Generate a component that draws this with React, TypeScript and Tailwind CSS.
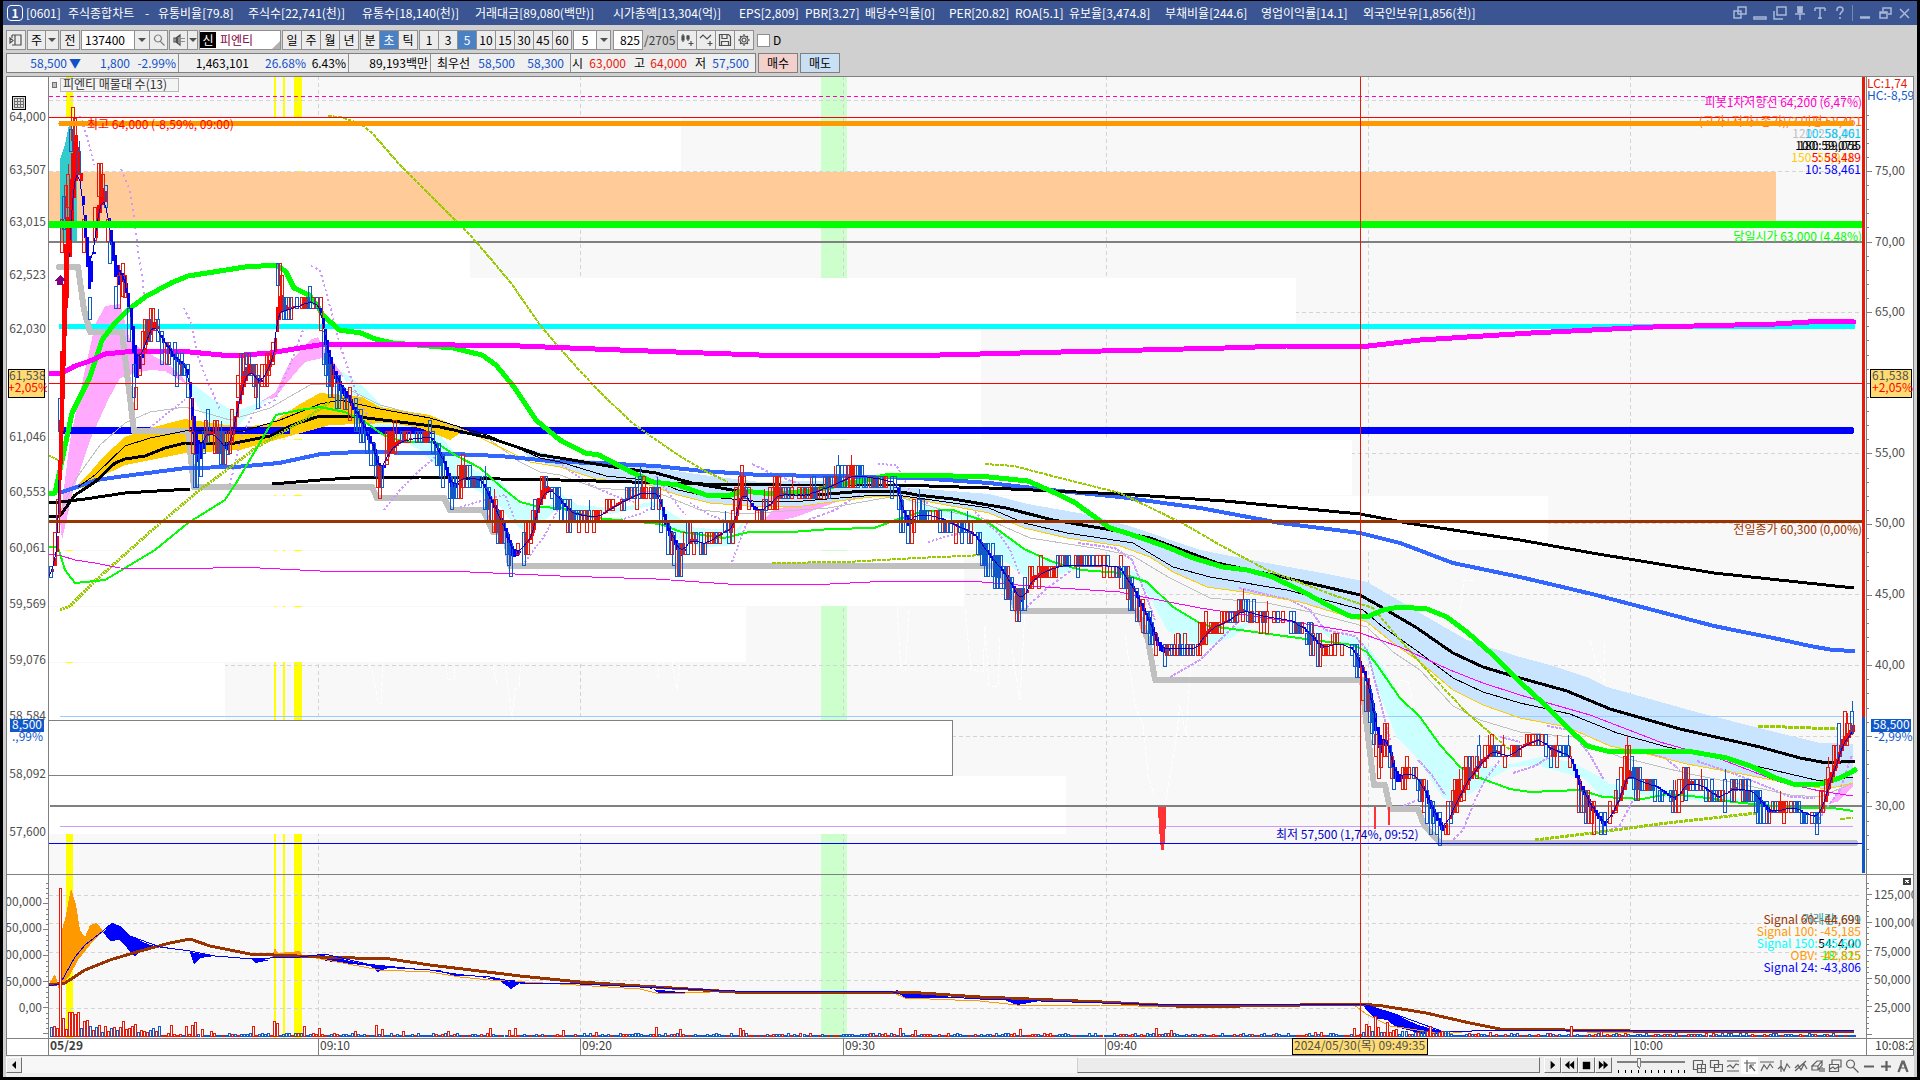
import React from "react";

type Pt = [number, number];

const parse = (s: string): Pt[] =>
  s.trim().split(/\s+/).map((p) => p.split(",").map(Number) as Pt);

const at = (pts: Pt[], x: number) => {
  if (x <= pts[0][0]) return pts[0][1];
  for (let i = 1; i < pts.length; i++) {
    if (x <= pts[i][0]) {
      const [x0, y0] = pts[i - 1];
      const [x1, y1] = pts[i];
      return y0 + ((y1 - y0) * (x - x0)) / (x1 - x0 || 1);
    }
  }
  return pts[pts.length - 1][1];
};

const noise = (n: number) => {
  const v = Math.sin(n * 127.1 + 311.7) * 43758.5453;
  return v - Math.floor(v);
};

/* ------------------------------------------------------------------ */
/* Series                                                              */
/* ------------------------------------------------------------------ */

const PRICE = parse(`49,576 54,540 57,500 60,230 66,190 70,125 75,130 80,200 85,290 88,310 92,240 96,185 103,180 107,240
115,300 122,275 128,330 134,400 138,360 145,330 152,315 160,345 175,365 185,370 194,480 199,455 205,425 215,440 225,455
232,420 238,370 248,360 257,390 265,365 273,345 276,275 283,310 295,305 310,300 318,310 325,370 335,390 345,400 355,420 370,450
378,485 385,450 392,440 428,436 440,465 450,495 460,475 478,480 490,510 500,530 511,562 520,548 531,525 538,480 550,490
566,515 595,517 612,504 640,491 656,494 662,530 678,560 688,536 702,545 715,534 730,526 740,479 750,512 760,512 775,492
800,496 830,484 850,474 880,480 894,484 903,535 915,512 930,516 952,526 970,534 985,557 1000,574 1018,606 1030,574
1060,564 1115,566 1130,592 1145,624 1158,656 1170,648 1195,648 1203,628 1225,620 1240,608 1255,616 1285,620 1302,630
1318,650 1335,642 1350,650 1362,680 1370,715 1377,765 1384,738 1393,788 1405,772 1415,778 1428,812 1441,836 1450,804
1465,774 1480,758 1490,748 1505,758 1520,744 1538,738 1545,750 1567,756 1577,792 1590,814 1603,828 1615,798 1626,764
1635,782 1655,788 1672,802 1685,778 1700,788 1717,800 1730,786 1750,792 1765,814 1790,806 1800,814 1816,818 1825,780 1840,735 1853,722`);

const STEP = 11.2;
const BAR = 2.18;

function buildCandles() {
  let up = "";
  let down = "";
  let red = "";
  let blue = "";
  let line = "";
  let fast = PRICE[0][1];
  let slow = PRICE[0][1];
  const snap = (y: number) => Math.round(Math.round((y - 465) / STEP) * STEP + 465);
  for (let i = 0; i < 828; i++) {
    const x = Math.round(49 + i * BAR);
    const mid = at(PRICE, x);
    const prev = at(PRICE, x - 6);
    const slope = mid - prev;
    fast += (mid - fast) * 0.5;
    slow += (mid - slow) * 0.26;
    const a = Math.round(fast);
    const b = Math.round(slow);
    if (Math.abs(a - b) > 1) {
      const seg = `M${x} ${a}V${b}h3V${a}z`;
      if (a < b) red += seg;
      else blue += seg;
    }
    line += `${i ? "L" : "M"}${x} ${b}`;
    if (noise(i) < 0.22) continue;
    const rising = slope < -1 ? noise(i + 9) < 0.8 : slope > 1 ? noise(i + 9) < 0.25 : noise(i + 9) < 0.5;
    const span = 11 * (Math.abs(slope) > 6 ? 2 + Math.round(noise(i + 3)) : 1 + (noise(i + 3) > 0.8 ? 1 : 0));
    const top = snap(mid - span / 2);
    const body = `M${x}.5 ${top}.5h3v${span}h-3z`;
    const wick = noise(i + 5) > 0.93 ? `M${x + 2}.5 ${top - 11}.5v11` : "";
    if (rising) up += body + wick;
    else down += body + wick;
  }
  return { up, down, red, blue, line };
}

const CANDLES = buildCandles();

const VOLUME_PEAKS: Record<number, number> = {
  52: 10, 55: 8, 60: 148, 63: 18, 67: 24, 71: 24, 74: 22, 78: 24, 82: 15, 87: 16, 92: 6, 98: 11, 105: 10, 112: 9, 122: 15,
  130: 10, 134: 12, 142: 5, 155: 5, 170: 11, 185: 10, 192: 11, 195: 14, 200: 7, 211: 5, 251: 10, 273: 15, 276: 13, 303: 10,
  319: 8, 355: 5, 376: 11, 382: 7, 402: 5, 447: 5, 490: 8, 508: 6, 514: 8, 562: 6, 595: 4, 655: 9, 680: 7, 738: 8, 743: 6,
  900: 8, 915: 6, 1018: 7, 1155: 8, 1169: 6, 1313: 4, 1321: 4, 1354: 8, 1366: 12, 1369: 10, 1373: 20, 1377: 9, 1387: 14,
  1396: 7, 1418: 4, 1428: 10, 1440: 5, 1490: 4, 1571: 10, 1600: 5,
};

function buildVolume() {
  let up = "";
  let down = "";
  for (let i = 0; i < 600; i++) {
    const x = Math.round(50 + i * 3.01);
    const peakKey = Object.keys(VOLUME_PEAKS).find((k) => Math.abs(Number(k) - x) <= 1);
    const base = x < 160 ? 4 + noise(i) * 6 : x > 1360 && x < 1450 ? 2 + noise(i) * 4 : noise(i) * 3;
    const h = Math.max(1, Math.round(peakKey ? VOLUME_PEAKS[Number(peakKey)] : base));
    const bar = `M${x}.5 1036.5v-${h}h2v${h}z`;
    if (peakKey || noise(i + 40) > 0.66) up += bar;
    else down += bar;
  }
  return { up, down };
}

const VOLUME = buildVolume();

type Curve = { c: string; w: number; p: string; d?: string };

const AREAS: { c: string; p: string }[] = [
  { c: "#ffaaff", p: "60,520 70,440 85,370 95,325 105,306 120,304 130,340 142,350 165,362 180,374 188,385 165,371 150,370 135,373 120,378 108,400 90,440 72,495 62,540" },
  { c: "#ffaaff", p: "260,402 275,393 290,362 310,340 318,337 325,350 345,378 335,372 322,358 305,362 285,385 275,398" },
  { c: "#ffaaff", p: "763,520 774,510 810,500 846,488 875,487 860,493 831,504 796,517 770,523" },
  { c: "#ffaaff", p: "1830,803 1853,773 1853,787 1837,802" },
  { c: "#ccffff", p: "186,378 210,397 235,412 265,400 272,397 245,418 232,434 215,427 200,410 190,392" },
  { c: "#ccffff", p: "340,370 360,384 385,408 405,418 430,422 450,448 475,470 500,480 520,505 560,505 545,520 525,532 510,520 495,500 470,487 440,470 420,450 400,440 375,428 355,400" },
  { c: "#ccffff", p: "560,493 578,505 615,508 653,502 670,512 695,528 735,530 745,520 735,545 700,548 675,537 655,505 610,514 575,517 560,508" },
  { c: "#ccffff", p: "899,495 917,503 946,510 967,512 989,523 1024,550 1053,560 1078,568 1053,577 1024,576 1003,560 974,530 953,520 924,512" },
  { c: "#ccffff", p: "1120,565 1137,573 1150,584 1173,606 1200,624 1227,629 1253,621 1233,637 1207,646 1183,640 1167,630 1153,603 1137,580" },
  { c: "#ccffff", p: "1307,623 1333,634 1360,638 1373,653 1387,673 1400,698 1420,718 1440,747 1457,767 1477,768 1520,763 1493,777 1473,792 1453,802 1443,798 1427,773 1413,753 1397,738 1383,703 1370,667 1360,648 1333,640" },
  { c: "#ccffff", p: "1500,767 1540,757 1572,762 1600,777 1610,784 1623,785 1627,773 1650,787 1690,793 1733,797 1780,803 1767,806 1733,803 1690,800 1643,795 1610,797 1600,795 1583,778 1540,766" },
  { c: "#c8e4ff", p: "520,447 560,457 600,461 650,467 703,475 760,482 846,480 900,487 989,494 1028,504 1090,515 1133,527 1200,550 1267,563 1333,575 1367,582 1393,597 1420,613 1467,640 1520,657 1550,665 1587,677 1607,687 1700,713 1767,730 1820,743 1853,744 1853,783 1827,789 1787,783 1747,775 1687,764 1643,753 1610,746 1567,727 1520,718 1483,705 1453,690 1420,662 1393,643 1367,622 1333,612 1300,602 1243,592 1207,587 1173,572 1150,557 1120,546 1067,538 1024,528 989,513 946,505 903,497 881,496 846,500 803,506 760,507 710,503 678,495 646,484 596,479 560,467 530,460" },
  { c: "#33cccc", p: "60,243 60,160 65,145 70,120 77,150 77,243" },
];

const GOLD = "75,487 85,478 105,455 125,437 150,428 185,419 240,427 270,424 300,404 320,393 345,395 362,397 380,407 430,415 465,430 450,440 420,428 390,423 330,425 290,436 240,450 185,453 125,465 100,477 85,488";

const CURVES: Curve[] = [
  { c: "#c0c0c0", w: 6, p: "59,267 78,267 84,310 90,332 122,332 134,431 188,431 194,487 372,487 377,498 444,498 450,510 483,510 493,532 505,532 510,566 996,566 1005,580 1017,611 1137,611 1148,640 1155,680 1362,680 1366,720 1374,785 1385,785 1390,809 1418,809 1424,825 1440,843 1855,843" },
  { c: "#cc99ff", w: 2, d: "2 3", p: "80,116 88,140 94,165" },
  { c: "#cc99ff", w: 2, d: "2 4", p: "121,169 128,185 133,207 137,243 142,275 145,300" },
  { c: "#cc99ff", w: 2, d: "2 3", p: "184,308 192,325 198,356 207,380 220,410" },
  { c: "#cc99ff", w: 2, d: "2 2", p: "150,428 165,415 185,400" },
  { c: "#cc99ff", w: 2, d: "2 3", p: "230,485 240,440 255,410 275,400 290,365 303,330" },
  { c: "#cc99ff", w: 2, d: "2 3", p: "311,266 320,270 327,295 340,345 355,390 372,425" },
  { c: "#cc99ff", w: 2, d: "2 2", p: "384,510 400,490 420,470 438,455" },
  { c: "#cc99ff", w: 2, d: "2 2", p: "460,507 485,500 505,495 515,520" },
  { c: "#cc99ff", w: 2, d: "2 2", p: "525,562 545,535 560,505" },
  { c: "#cc99ff", w: 2, d: "2 2", p: "562,465 590,485 620,498 635,502" },
  { c: "#cc99ff", w: 2, d: "2 2", p: "620,520 640,514 655,506" },
  { c: "#cc99ff", w: 2, d: "2 2", p: "656,476 668,492 685,515" },
  { c: "#cc99ff", w: 2, d: "2 2", p: "690,503 710,515 728,522" },
  { c: "#cc99ff", w: 2, d: "2 2", p: "732,562 742,535 748,520" },
  { c: "#cc99ff", w: 2, d: "3 2", p: "752,464 775,475 800,484" },
  { c: "#cc99ff", w: 2, d: "3 2", p: "808,520 835,510 850,500 860,495" },
  { c: "#cc99ff", w: 2, d: "2 2", p: "878,464 896,465 902,475 912,495 930,505" },
  { c: "#cc99ff", w: 2, d: "2 2", p: "928,542 945,537 962,533" },
  { c: "#cc99ff", w: 2, d: "2 2", p: "975,512 1000,535 1010,550 1020,575" },
  { c: "#cc99ff", w: 2, d: "3 2", p: "1026,608 1045,590 1072,570" },
  { c: "#cc99ff", w: 2, d: "3 1", p: "1078,543 1115,548 1132,560 1142,585 1155,620" },
  { c: "#cc99ff", w: 2, d: "3 1", p: "1170,677 1200,660 1240,620" },
  { c: "#cc99ff", w: 2, d: "3 1", p: "1239,588 1290,600 1310,610 1325,630 1355,636 1367,650 1380,700 1390,740" },
  { c: "#cc99ff", w: 2, d: "3 2", p: "1403,806 1418,800" },
  { c: "#cc99ff", w: 2, d: "3 1", p: "1418,760 1432,775 1445,795" },
  { c: "#cc99ff", w: 2, d: "3 2", p: "1453,840 1463,830 1475,800 1485,780 1500,760" },
  { c: "#cc99ff", w: 2, d: "3 1", p: "1500,737 1520,742" },
  { c: "#cc99ff", w: 2, d: "3 1", p: "1513,773 1535,766 1560,750" },
  { c: "#cc99ff", w: 2, d: "3 1", p: "1547,726 1570,730 1590,755 1604,780" },
  { c: "#cc99ff", w: 2, d: "3 2", p: "1610,830 1620,825 1633,800" },
  { c: "#cc99ff", w: 2, d: "3 1", p: "1640,751 1665,758 1680,770" },
  { c: "#cc99ff", w: 2, d: "3 1", p: "1697,761 1740,776 1775,790 1790,797 1815,798" },
  { c: "#cc99ff", w: 2, d: "3 2", p: "1818,820 1840,790 1852,755" },
  { c: "#c0c0c0", w: 1, p: "60,512 75,480 100,445 125,423 150,412 185,407 230,420 270,408 310,385 325,384 350,390 380,405 430,418 490,440 520,462 540,472 560,475 596,488 656,492 700,510 739,514 771,512 828,508 896,496 950,512 989,520 1030,538 1100,549 1133,556 1170,578 1210,598 1267,603 1310,612 1367,627 1393,652 1420,670 1453,706 1480,720 1520,732 1573,737 1620,757 1690,774 1740,784 1790,795 1820,797 1853,783" },
  { c: "#ffcc00", w: 1, p: "465,430 530,462 560,467 596,479 646,484 678,495 710,503 760,507 803,506 846,500 881,496 903,497 946,505 989,513 1024,528 1067,538 1120,546 1150,557 1173,572 1207,587 1243,592 1300,602 1333,612 1367,622 1393,643 1420,662 1453,690 1483,705 1520,718 1567,727 1610,746 1643,753 1687,764 1747,775 1787,783 1827,789 1853,783" },
  { c: "#3366ff", w: 4, p: "59,493 77,487 96,480 125,476 186,468 236,467 279,463 321,454 357,452 429,453 500,456 560,462 596,463 656,466 703,471 760,475 831,476 917,478 989,483 1060,491 1120,497 1200,508 1280,523 1360,533 1400,543 1453,563 1520,577 1592,594 1714,626 1783,640 1810,646 1833,650 1855,651" },
  { c: "#000000", w: 3, p: "48,503 60,502 85,499 125,493 190,489" },
  { c: "#000000", w: 3, p: "272,484 320,480 350,478 420,477 500,479 560,480 703,484 781,485 899,485 989,488 1120,494 1225,501 1360,514 1407,523 1520,540 1592,553 1714,573 1854,588" },
  { c: "#000000", w: 1, p: "78,487 95,475 125,446 150,438 190,430 240,432 280,420 320,404 340,400 380,409 430,418 490,436 540,458 560,462 606,476 656,481 678,490 710,497 753,501 803,501 864,496 896,495 946,502 989,508 1024,523 1067,533 1120,541 1133,543 1173,567 1210,577 1287,590 1333,602 1363,610 1383,627 1420,653 1453,678 1483,692 1520,703 1570,714 1617,733 1667,747 1760,767 1820,781 1853,777" },
  { c: "#000000", w: 3, p: "48,517 60,516 75,495 95,482 115,463 125,459 145,456 165,448 185,443 230,444 270,436 295,424 320,416 350,416 400,422 440,427 490,438 520,448 540,455 560,458 614,467 656,473 692,483 738,491 774,494 828,494 864,491 896,491 917,495 953,499 1006,508 1053,520 1106,529 1150,538 1217,563 1273,575 1313,584 1360,595 1383,608 1417,628 1453,653 1483,667 1513,676 1567,691 1610,709 1680,729 1760,747 1800,758 1827,763 1855,761" },
  { c: "#99cc00", w: 2, d: "4 1", p: "328,116 340,117 350,120 362,125 372,133 400,165 430,195 455,220 470,235 490,258 500,270 511,283 540,325 557,345 580,371 600,392 630,421 649,435 675,453 703,470 728,482" },
  { c: "#99cc00", w: 2, d: "4 1", p: "985,464 1014,466 1060,478 1120,493 1182,523 1220,545 1267,570 1333,595 1373,608 1400,640 1433,677 1467,713 1510,750" },
  { c: "#99cc00", w: 3, d: "2 1", p: "60,610 70,606 96,580 150,532 196,493 257,447 304,420 329,403" },
  { c: "#99cc00", w: 2, d: "3 1", p: "48,455 60,461" },
  { c: "#99cc00", w: 2, d: "4 1", p: "772,563 846,562 917,558 985,555" },
  { c: "#99cc00", w: 3, d: "4 1", p: "1535,840 1600,832 1667,823 1757,813" },
  { c: "#99cc00", w: 3, d: "5 1", p: "1758,726 1838,729" },
  { c: "#99cc00", w: 2, d: "5 1", p: "1840,819 1853,818" },
  { c: "#00ff00", w: 2, p: "48,547 58,547 65,570 75,583 105,580 125,568 155,550 188,523 225,500 238,480 258,446 276,415 300,410 320,407 345,412 365,422 385,436 405,442 435,442 455,455 480,468 500,486 520,502 540,507 560,508 596,518 660,524 681,532 724,538 749,532 792,532 831,529 874,528 896,520 924,511 953,510 989,523 1024,549 1053,562 1081,570 1120,573 1147,582 1173,607 1203,625 1240,630 1313,640 1353,645 1367,652 1377,665 1400,698 1420,717 1440,745 1460,767 1480,778 1510,789 1530,792 1580,790 1603,797 1643,799 1667,794 1700,797 1733,802 1793,808 1833,808 1853,811" },
  { c: "#ff00ff", w: 1, p: "48,554 62,556 75,560 95,563 120,568 186,569 240,567 320,571 470,572 560,576 656,579 728,584 830,584 890,581 970,581 1030,586 1120,592 1133,595 1200,608 1300,623 1360,633 1400,647 1450,670 1483,683 1520,695 1590,715 1660,742 1720,759 1780,782 1820,791 1853,796" },
  { c: "#00ff00", w: 5, p: "48,493 55,493 60,470 72,413 90,377 102,340 115,323 128,310 145,297 171,283 188,276 245,267 277,265 286,272 294,288 309,295 318,307 323,315 339,330 361,333 375,339 393,343 453,348 482,355 496,365 514,387 536,420 560,440 585,453 599,455 631,472 653,482 678,485 706,495 728,496 742,491 774,494 810,491 839,485 867,480 890,475 917,475 989,477 1028,481 1053,492 1074,502 1110,528 1130,534 1167,547 1193,558 1223,567 1247,570 1270,576 1300,590 1333,608 1350,616 1367,617 1383,610 1400,607 1427,609 1447,617 1467,632 1493,655 1520,682 1545,705 1567,727 1587,746 1607,751 1687,751 1727,758 1753,767 1773,777 1793,784 1820,784 1840,778 1855,770" },
  { c: "#ff00ff", w: 5, p: "48,373 60,374 75,366 90,361 105,354 125,352 165,351 190,352 232,356 270,353 300,348 325,344 390,344 520,346 620,350 759,355 857,355 940,355 1102,351 1225,348 1286,346 1360,347 1420,340 1531,333 1653,327 1776,324 1825,321 1854,322" },
];

/* Faint traces of an indicator drawn in white over the pale background. */
const WHITE_TRACES = "M369 663l3 8l6 30l3 4l2 -42M445 663l3 16l6 0l1 -14M493 665l4 20M505 663l7 56l3 -30l4 -2l2 -24M658 660v17M672 662l5 28l3 -26M897 607l4 62l4 4l4 -62M965 610l6 60l12 2l2 -46l4 60l9 0l2 -50M1012 650l8 50l5 -90M1125 635l10 70l8 20l5 50l6 20M1166 800l10 -60l4 -35l6 30l6 -90M1395 715l5 -35l8 2l6 25M1420 710l10 50h10M1590 640l10 35l4 6v-40M1460 610l4 -30h10";

const WHITE_ROWS: [number, number, number][] = [
  [118, 53, 681], [221, 57, 470], [278, 47, 1296], [326, 113, 981], [440, 55, 1352], [496, 54, 1548],
  [551, 55, 964], [607, 55, 746], [663, 57, 225], [776, 58, 1066],
];

const GRID_X = [318, 580, 843, 1106, 1368, 1630];
const GRID_Y = [100, 171, 241, 312, 383, 453, 523, 594, 665, 736];
const YELLOW: [number, number][] = [[66, 7], [274, 2], [283, 2], [294, 8]];

const LEFT_LABELS: [number, string][] = [
  [117, "64,000"], [170, "63,507"], [222, "63,015"], [275, "62,523"], [329, "62,030"], [437, "61,046"], [492, "60,553"],
  [548, "60,061"], [604, "59,569"], [660, "59,076"], [716, "58,584"], [774, "58,092"], [832, "57,600"],
];
const RIGHT_LABELS: [number, string][] = [
  [171, "75,00"], [242, "70,00"], [312, "65,00"], [453, "55,00"], [523, "50,00"], [594, "45,00"], [665, "40,00"], [806, "30,00"],
];
const LOWER_LEFT: [number, string][] = [[902, "00,000"], [928, "50,000"], [955, "00,000"], [982, "50,000"], [1008, "0,00"]];
const LOWER_RIGHT: [number, string][] = [[895, "125,000"], [923, "100,000"], [952, "75,000"], [980, "50,000"], [1008, "25,000"]];
const TIMES: [number, string][] = [[320, "09:10"], [582, "09:20"], [845, "09:30"], [1107, "09:40"], [1633, "10:00"]];

/* ------------------------------------------------------------------ */
/* Chart                                                               */
/* ------------------------------------------------------------------ */

function T({ x, y, c, end, bold, children }: { x: number; y: number; c: string; end?: boolean; bold?: boolean; children: string }) {
  return (
    <text x={x} y={y + 4} fill={c} textAnchor={end ? "end" : "start"} fontWeight={bold ? 700 : 400}>
      {children}
    </text>
  );
}

function H({ y, x1 = 49, x2 = 1862, c, w = 1, d }: { y: number; x1?: number; x2?: number; c: string; w?: number; d?: string }) {
  return <line x1={x1} x2={x2} y1={y} y2={y} stroke={c} strokeWidth={w} strokeDasharray={d} />;
}

function Line({ s }: { s: Curve }) {
  return (
    <polyline
      points={s.p}
      fill="none"
      stroke={s.c}
      strokeWidth={s.w}
      strokeDasharray={s.d}
      strokeLinejoin="round"
      strokeLinecap={s.w > 4 ? "round" : "butt"}
    />
  );
}

function Chart() {
  return (
    <svg
      viewBox="6 76 1908 980"
      preserveAspectRatio="none"
      role="img"
      aria-label="피엔티 5초 차트"
      className="block h-full w-full text-[12px]"
      shapeRendering="crispEdges"
    >
      <defs>
        <clipPath id="left-axis"><rect x="7" y="76" width="40" height="980" /></clipPath>
        <clipPath id="right-axis"><rect x="1867" y="76" width="46" height="980" /></clipPath>
        <clipPath id="plot"><rect x="49" y="76" width="1813" height="962" /></clipPath>
      </defs>
      <rect x="6" y="76" width="1908" height="980" fill="#ffffff" />
      <rect x="49" y="76" width="1817" height="962" fill="#f8f8f8" />
      <rect x="821" y="76" width="26" height="962" fill="#ccffcc" />
      {YELLOW.map(([x, w]) => <rect key={x} x={x} y="76" width={w} height="962" fill="#ffff00" />)}
      {GRID_X.map((x) => <line key={x} x1={x + 0.5} x2={x + 0.5} y1="76" y2="1038" stroke="#d4d4d4" strokeDasharray="4 3" />)}
      {GRID_Y.map((y) => <H key={y} y={y + 0.5} c="#d4d4d4" d="4 3" />)}
      {LOWER_RIGHT.map(([y]) => <H key={y} y={y + 0.5} c="#d4d4d4" d="4 3" />)}
      {WHITE_ROWS.map(([y, h, x]) => <rect key={y} x="49" y={y} width={x - 49} height={h} fill="#ffffff" />)}
      <rect x="49" y="172" width="1727" height="49" fill="#ffcc99" />
      <rect x="48.5" y="720.5" width="904" height="55" fill="#ffffff" stroke="#808080" />
      <path d={WHITE_TRACES} fill="none" stroke="#ffffff" strokeDasharray="5 2" />

      <g clipPath="url(#plot)">
        {AREAS.map((a, i) => <polygon key={i} points={a.p} fill={a.c} />)}
        <H y={716.5} x1={60} x2={1853} c="#99ccff" />
        <H y={806} x1={50} c="#808080" w={2} />
        <H y={826.5} x1={60} x2={1853} c="#cc99ff" />
        <H y={242} c="#808080" w={2} />
        <H y={326.5} x1={59} x2={1855} c="#00ffff" w={5} />
        <line x1="62" x2="1851" y1="430.5" y2="430.5" stroke="#0000ff" strokeWidth="7" strokeLinecap="round" />
        <polygon points={GOLD} fill="#ffcc00" />
        <line x1="190" x2="290" y1="430.5" y2="430.5" stroke="#0000ff" strokeWidth="7" />
        {CURVES.map((s, i) => <Line key={i} s={s} />)}
        <path d={CANDLES.red} fill="#ff0000" />
        <path d={CANDLES.blue} fill="#0000ff" />
        <path d={CANDLES.up} fill="none" stroke="#e61a0a" />
        <path d={CANDLES.down} fill="none" stroke="#1159c8" />
        <path d={CANDLES.line} fill="none" stroke="#0000cc" />
        <polygon points="58,480 60,400 66,240 70,240 66,350 62,480" fill="#ff0000" />
        <polygon points="54,281 60,275 66,281 63,281 63,285 57,285 57,281" fill="#800080" />
        <path d="M1158 807h8v14l-1 16l-1 13h-3l-2 -22zM1374 807h2v22h-2zM1388 807h2v18h-2z" fill="#ff3333" />
        <H y={96.5} c="#ff00cc" d="4 3" />
        <H y={117.5} c="#ff0000" />
        <line x1="61" x2="1851" y1="123.5" y2="123.5" stroke="#ff9900" strokeWidth="5" strokeLinecap="round" />
        <H y={224.5} c="#00ff00" w={7} />
        <H y={521.5} c="#993300" w={3} />
        <H y={843.5} c="#0000ff" />
        <H y={383.5} c="#ff0000" />

        <polygon points="49,984 55,974 58,984 60,998 61,984" fill="#ff9900" />
        <polygon points="61,985 62,930 66,915 71,888 76,905 80,930 85,937 90,925 97,923 103,931 90,945 78,960 70,975 62,985" fill="#ff9900" />
        <polygon points="103,932 112,923 120,926 130,936 150,945 160,947 150,948 141,950 135,957 127,948 120,940 110,941" fill="#0000ff" />
        <path d="M190 952L194 965L200 958L215 956zM250 958L255 963L270 960zM318 954L326 961L370 966L378 972L388 968L440 970L455 977L470 975L500 981L511 989L520 983L540 983L490 978L430 970L360 963zM650 987L660 994L690 993L650 989zM895 990L905 998L960 998L900 991zM1000 998L1017 1005L1040 1001zM1363 1004L1392 1013L1418 1025L1444 1032L1431 1036L1396 1027L1387 1020L1374 1018L1366 1010z" fill="#0000ff" />
        <path d="M272 957L275 948L278 953L300 951L303 957z" fill="#ff9900" />
        <polyline points="300,955 380,970 430,972 460,977 490,980 560,984 640,989 660,994 735,991 890,991 905,998 980,1001 1017,1005 1100,1005 1176,1007 1353,1004 1366,1014 1390,1026 1444,1034 1480,1030 1560,1030 1600,1033 1700,1031 1854,1030" fill="none" stroke="#ff9900" />
        <polyline points="49,985 65,983 85,970 110,960 140,951 170,943 190,939 210,946 250,954 320,957 390,959 430,965 520,976 580,982 640,986 735,992 906,992 980,997 1102,1002 1176,1006 1240,1006 1361,1004 1383,1006 1426,1013 1470,1023 1500,1029 1630,1031 1854,1032" fill="none" stroke="#993300" strokeWidth="3" />
        <polyline points="49,986 60,984 65,975 75,957 85,945 103,931 112,923 130,936 160,947 190,951 215,956 240,958 270,958 300,957 325,954 350,960 380,967 430,970 460,975 490,977 520,983 560,983 640,987 735,991 890,991 900,994 980,999 1102,1003 1176,1005 1353,1004 1363,1004 1392,1013 1444,1032 1500,1030 1854,1031" fill="none" stroke="#0000ff" />
        <path d={VOLUME.down} fill="none" stroke="#1159c8" />
        <path d={VOLUME.up} fill="#ffffff" stroke="#e61a0a" />
        <line x1="1360.5" x2="1360.5" y1="76" y2="1038" stroke="#e61a0a" />
      </g>

      <T x={87} y={125} c="#ff0000">최고 64,000 (-8,59%, 09:00)</T>
      <T x={1276} y={835} c="#0000cc">최저 57,500 (1,74%, 09:52)</T>
      <T x={1862} y={103} end c="#ff00cc">피봇1차저항선 64,200 (6,47%)</T>
      <T x={1862} y={122} end c="#ff6600">(고가+저가+종가)/3 이평 58,461</T>
      <rect x="1675" y="121" width="178" height="5" fill="#ff9900" />
      <T x={1855} y={134} end c="#c0c0c0">120: 258,00</T>
      <T x={1861} y={134} end c="#00ccff">10: 58,461</T>
      <T x={1858} y={146} end c="#000000">100: 59,078</T>
      <T x={1861} y={146} end c="#000000">180: 59,055</T>
      <T x={1854} y={158} end c="#ffcc00">150: 58,911</T>
      <T x={1861} y={158} end c="#ff0000">5: 58,489</T>
      <T x={1861} y={170} end c="#0000ff">10: 58,461</T>
      <T x={1862} y={237} end c="#00ff00">당일시가 63,000 (4,48%)</T>
      <T x={1862} y={530} end c="#993300">전일종가 60,300 (0,00%)</T>

      <T x={1861} y={920} end c="#339999">거래량: 699</T>
      <T x={1861} y={920} end c="#993300">Signal 60: -44,691</T>
      <T x={1861} y={932} end c="#ff9900">Signal 100: -45,185</T>
      <T x={1861} y={944} end c="#000000">54: 4,00</T>
      <T x={1861} y={944} end c="#00ffff">Signal 150: -45,620</T>
      <T x={1861} y={956} end c="#00ff00">18: 815</T>
      <T x={1861} y={956} end c="#ff9900">OBV: -42,825</T>
      <T x={1861} y={968} end c="#0000ff">Signal 24: -43,806</T>

      <rect x="1862" y="76" width="3" height="641" fill="#e61a0a" />
      <rect x="1862" y="717" width="3" height="156" fill="#1159c8" />
      <path d="M48.5 76V1056M1866.5 76V1056M6 874.5H1914M6 1038.5H1914M318.5 1038V1056M580.5 1038V1056M843.5 1038V1056M1105.5 1038V1056M1630.5 1038V1056" stroke="#808080" fill="none" />
      <rect x="6.5" y="76.5" width="1907" height="979" fill="none" stroke="#808080" />
      {Array.from({ length: 53 }, (_, i) => 115 + i * 14.12).map((y, i) => (
        <line key={i} x1="1867" x2={i % 5 === 4 ? 1872 : 1869} y1={y} y2={y} stroke="#808080" />
      ))}
      {Array.from({ length: 28 }, (_, i) => 883 + i * 5.6).map((y, i) => (
        <line key={i} x1="1867" x2={i % 5 === 2 ? 1872 : 1869} y1={y} y2={y} stroke="#808080" />
      ))}
      {Array.from({ length: 30 }, (_, i) => 883 + i * 5.2).map((y, i) => (
        <line key={i} x1={i % 5 === 4 ? 43 : 46} x2="48" y1={y} y2={y} stroke="#808080" />
      ))}

      <g clipPath="url(#left-axis)">
        {LEFT_LABELS.map(([y, s]) => <T key={s} x={46} y={y} end c="#505050">{s}</T>)}
        {LOWER_LEFT.map(([y, s]) => <T key={y} x={42} y={y} end c="#505050">{s}</T>)}
        <rect x="8.5" y="369.5" width="36" height="28" fill="#ffdc73" stroke="#000000" />
        <T x={9} y={376} c="#505050">61,538</T>
        <T x={8} y={388} c="#ff0000">+2,05%</T>
        <rect x="10" y="719" width="34" height="13" fill="#1159c8" />
        <T x={12} y={725} c="#ffffff">8,500</T>
        <T x={12} y={737} c="#1159c8">.,99%</T>
      </g>
      <g clipPath="url(#right-axis)">
        <T x={1867} y={84} c="#e61a0a">LC:1,74</T>
        <T x={1867} y={96} c="#1159c8">HC:-8,59</T>
        {RIGHT_LABELS.map(([y, s]) => <T key={s} x={1875} y={y} c="#505050">{s}</T>)}
        {LOWER_RIGHT.map(([y, s]) => <T key={s} x={1874} y={y} c="#505050">{s}</T>)}
        <rect x="1870.5" y="369.5" width="41" height="28" fill="#ffdc73" stroke="#000000" />
        <T x={1872} y={376} c="#505050">61,538</T>
        <T x={1872} y={388} c="#ff0000">+2,05%</T>
        <rect x="1871" y="719" width="40" height="13" fill="#1159c8" />
        <T x={1873} y={725} c="#ffffff">58,500</T>
        <T x={1874} y={737} c="#1159c8">-2,99%</T>
        <T x={1875} y={1046} c="#404040">10:08:25</T>
        <rect x="1903" y="878" width="8" height="7" fill="#404040" />
        <path d="M1905 880l4 3M1909 880l-4 3" stroke="#ffffff" />
      </g>

      <T x={50} y={1046} bold c="#404040">05/29</T>
      {TIMES.map(([x, s]) => <T key={s} x={x} y={1046} c="#404040">{s}</T>)}
      <rect x="1292.5" y="1038.5" width="135" height="16" fill="#ffdc73" stroke="#000000" />
      <T x={1294} y={1046} c="#505050">2024/05/30(목) 09:49:35</T>

      <rect x="60.5" y="78.5" width="118" height="13" fill="#f4f4f4" stroke="#b8b8b8" />
      <rect x="52.5" y="82.5" width="4" height="5" fill="#c0c0c0" stroke="#707070" />
      <T x={63} y={85} c="#303030">피엔티 매물대 수(13)</T>
      <rect x="12.5" y="96.5" width="13" height="13" fill="#e0e0e0" stroke="#000000" />
      <path d="M14.5 98.5h9v9h-9zM14.5 101.5h9M14.5 104.5h9M17.5 98.5v9M20.5 98.5v9" fill="none" stroke="#707070" />
    </svg>
  );
}

/* ------------------------------------------------------------------ */
/* Window chrome                                                       */
/* ------------------------------------------------------------------ */

const TITLE: [string, string][] = [
  ["[0601]", "w-[42px]"], ["주식종합차트", "w-[77px]"], ["-", "w-[13px]"], ["유통비율[79.8]", "w-[90px]"], ["주식수[22,741(천)]", "w-[114px]"],
  ["유통수[18,140(천)]", "w-[113px]"], ["거래대금[89,080(백만)]", "w-[138px]"], ["시가총액[13,304(억)]", "w-[126px]"], ["EPS[2,809]", "w-[66px]"],
  ["PBR[3.27]", "w-[60px]"], ["배당수익률[0]", "w-[84px]"], ["PER[20.82]", "w-[66px]"], ["ROA[5.1]", "w-[54px]"], ["유보율[3,474.8]", "w-[96px]"],
  ["부채비율[244.6]", "w-[96px]"], ["영업이익률[14.1]", "w-[102px]"], ["외국인보유[1,856(천)]", "w-[130px]"],
];

function TitleBar() {
  return (
    <header className="flex h-6 items-center bg-[#3a5592] text-[12px] leading-6 text-white">
      <span className="ml-1 flex h-4 w-4 items-center justify-center rounded-sm border border-white text-[12px] font-bold leading-none">1</span>
      <h1 className="flex min-w-0 flex-1 overflow-hidden pl-[3px] whitespace-nowrap">
        {TITLE.map(([t, w]) => (
          <span key={t} className={`${w} shrink-0`}>{t}</span>
        ))}
      </h1>
      <div className="flex items-center gap-1 pr-1 text-[#a9b8d8]">
        {WINDOW_ICONS.map(([name, d], i) => (
          <React.Fragment key={name}>
            {i === 6 && <span className="h-4 w-px bg-[#7488b4]" />}
            <button type="button" aria-label={name} className="flex h-4 w-4 items-center justify-center">
              <svg width="14" height="14" viewBox="0 0 14 14" fill="none" stroke="currentColor" strokeWidth="1.500"><path d={d} /></svg>
            </button>
          </React.Fragment>
        ))}
      </div>
    </header>
  );
}

const WINDOW_ICONS: [string, string][] = [
  ["분리", "M5 1h8v7h-8zM1 5h7v7h-7z"],
  ["접기", "M1 11h12v2h-12z"],
  ["복제", "M4 1h9v8h-9zM1 5v8h9"],
  ["고정", "M4 1h6M5 1v6M7 1v6M9 1v6M6 1v6M8 1v6M2 8h10M7 8v6"],
  ["글꼴", "M2 2h10M7 2v11M2 2v3M12 2v3M5 12h4"],
  ["도움말", "M4 5v-1a3 3 0 0 1 6 0c0 2 -3 2 -3 5M7 11v2"],
  ["최소화", "M2 11h10M2 12h10"],
  ["이전 크기", "M5 5v-3h8v6h-3M2 6h7v6h-7zM2 7h7"],
  ["닫기", "M2 3l9 9M11 3l-9 9"],
];

const BTN = "flex h-5 shrink-0 items-center justify-center border border-[#909090] bg-[#ececec] text-black";

function Arrow() {
  return <span className="border-x-4 border-t-4 border-x-transparent border-t-[#505050]" />;
}

function Icon({ d, c = "#505050", s = 14 }: { d: string; c?: string; s?: number }) {
  return (
    <svg width={s} height={s} viewBox="0 0 14 14" fill="none" stroke={c} strokeWidth="1.2"><path d={d} /></svg>
  );
}

function Group({ items, active }: { items: string[]; active: string }) {
  return (
    <div className="ml-px flex shrink-0">
      {items.map((t, i) => (
        <button
          key={t}
          type="button"
          className={`flex h-5 items-center justify-center border border-[#909090] ${i ? "w-[19px] border-l-0" : "w-5"} ${t === active ? "bg-[#4a80c4] text-white" : "bg-[#ececec] text-black"}`}
        >
          {t}
        </button>
      ))}
    </div>
  );
}

function Toolbar() {
  return (
    <div className="flex h-5 items-center overflow-hidden leading-5 whitespace-nowrap">
      <button type="button" aria-label="패널" className={`${BTN} w-5`}><Icon d="M3 2h9v10h-9M3 2v3M6 2v10M1 5v5l3 -2.500z" /></button>
      <button type="button" className={`${BTN} ml-px w-[18px] border-r-0 text-[#606060]`}>주</button>
      <button type="button" aria-label="종목 구분" className={`${BTN} w-[14px]`}><Arrow /></button>
      <button type="button" className={`${BTN} ml-px w-[20px]`}>전</button>
      <input aria-label="종목코드" defaultValue="137400" className="ml-px h-5 w-[54px] border border-[#909090] bg-white px-[3px]" />
      <button type="button" aria-label="종목 목록" className={`${BTN} w-[15px] border-l-0`}><Arrow /></button>
      <button type="button" aria-label="종목 검색" className={`${BTN} w-[18px] border-l-0`}><Icon c="#808080" d="M6 2a3.500 3.500 0 1 0 0.010 0M8.500 8.500l4 4" /></button>
      <button type="button" aria-label="소리" className={`${BTN} ml-px w-[19px]`}><Icon d="M2 5h2l4 -3v10l-4 -3h-2zM4 5v4M5 4v6M6 4v6M10 5v1M10 8v1M12 5v1M12 8v1" /></button>
      <button type="button" aria-label="소리 메뉴" className={`${BTN} w-[10px] border-l-0`}><Arrow /></button>
      <div className="relative ml-px flex h-5 w-[82px] shrink-0 items-center border border-[#909090] bg-white">
        <span className="flex h-4 w-4 items-center justify-center bg-black text-white">신</span>
        <span className="ml-1 text-[#800040]">피엔티</span>
        <span className="absolute right-0 bottom-0 border-b-8 border-l-8 border-b-[#b0b0b0] border-l-transparent" />
      </div>
      <Group items={["일", "주", "월", "년"]} active="" />
      <Group items={["분", "초", "틱"]} active="초" />
      <Group items={["1", "3", "5", "10", "15", "30", "45", "60"]} active="5" />
      <input aria-label="주기" defaultValue="5" className="ml-px h-5 w-[24px] border border-[#909090] bg-white text-center" />
      <button type="button" aria-label="주기 목록" className={`${BTN} w-[14px] border-l-0`}><Arrow /></button>
      <input aria-label="봉 개수" defaultValue="825" className="ml-[2px] h-5 w-[30px] border border-[#909090] bg-white pr-[2px] text-right" />
      <span className="w-[34px] pl-px text-[#404040]">/2705</span>
      <div className="flex shrink-0">
        <button type="button" aria-label="차트 추가" className={`${BTN} w-[20px]`}><Icon d="M3 1v8M2 3h2v4h-2zM8 2v6M7 3h2v3h-2zM11 8v5M8.500 10.500h5" /></button>
        <button type="button" aria-label="지표 추가" className={`${BTN} w-[19px] border-l-0`}><Icon d="M1 5l3 -3l4 4l4 -4M11 8v5M8.500 10.500h5" /></button>
        <button type="button" aria-label="저장" className={`${BTN} w-[19px] border-l-0`}><Icon d="M1.500 1.500h9l2 2v9h-11zM4 1.500v4h5v-4M3.500 12.500v-4h7v4" /></button>
        <button type="button" aria-label="설정" className={`${BTN} w-[19px] border-l-0`}><Icon d="M7 3a4 4 0 1 0 0.010 0M7 5a2 2 0 1 0 0.010 0M7 1v2M7 11v2M1 7h2M11 7h2M3 3l1 1M10 10l1 1M11 3l-1 1M4 10l-1 1" /></button>
      </div>
      <label className="ml-[3px] flex items-center gap-[3px]">
        <input type="checkbox" className="h-[13px] w-[13px] appearance-none border border-[#909090] bg-white" />D
      </label>
    </div>
  );
}

const QUOTES: [string, string][] = [
  ["58,500", "w-[60px] text-right text-[#1050c8]"],
  ["▼", "w-[14px] text-right text-[#1050c8]"],
  ["1,800", "w-[49px] text-right text-[#1050c8]"],
  ["-2.99%", "w-[49px] border-r border-[#909090] pr-[2px] text-right text-[#1050c8]"],
  ["1,463,101", "w-[70px] text-right"],
  ["26.68%", "w-[57px] text-right text-[#1050c8]"],
  ["6.43%", "w-[43px] border-r border-[#909090] pr-[2px] text-right"],
  ["89,193백만", "w-[82px] border-r border-[#909090] pr-[2px] text-right"],
  ["최우선", "w-[39px] text-right"],
  ["58,500", "w-[45px] text-right text-[#1050c8]"],
  ["58,300", "w-[56px] border-r border-[#909090] pr-[6px] text-right text-[#1050c8]"],
  ["시", "w-[12px] text-right"],
  ["63,000", "w-[43px] text-right text-[#e61a0a]"],
  ["고", "w-[19px] text-right"],
  ["64,000", "w-[42px] text-right text-[#e61a0a]"],
  ["저", "w-[19px] text-right"],
  ["57,500", "w-[43px] text-right text-[#1050c8]"],
];

function QuoteBar() {
  return (
    <div className="mt-[3px] flex h-5 items-center leading-[18px] whitespace-nowrap">
      <div className="flex h-5 w-[750px] shrink-0 border border-[#808080] bg-[#f0f0f0]">
        {QUOTES.map(([t, cls], i) => <span key={i} className={`${cls} shrink-0`}>{t}</span>)}
      </div>
      <button type="button" className="ml-[2px] h-5 w-10 border border-[#808080] bg-[#f4d0cc]">매수</button>
      <button type="button" className="ml-[2px] h-5 w-10 border border-[#808080] bg-[#c8dff4]">매도</button>
    </div>
  );
}

const MEDIA: [string, string][] = [
  ["재생", "M5 2v9l5 -4.500z"],
  ["뒤로", "M7 2v9l-5 -4.500zM12 2v9l-5 -4.500z"],
  ["정지", "M3 3h8v8h-8z"],
  ["앞으로", "M2 2v9l5 -4.500zM7 2v9l5 -4.500z"],
];

const TOOLS: [string, string][] = [
  ["창 추가", "M1.500 1.500h9v4M1.500 1.500v9h4M5.500 5.500h8v8h-8zM9.500 5.500v8M5.500 9.500h8"],
  ["창 겹치기", "M1.500 1.500h8v7h-8zM5.500 5.500h8v7h-8z"],
  ["범위", "M1 2h12M1 12h12M1 8l3 -2l3 3l3 -4l3 1"],
  ["십자선", "M1 4h12M4 1v12M7 6l5 6M7 6v4M7 6h4"],
  ["수평선", "M0 3h14M1 12l3 -6l3 4l3 -5l3 4"],
  ["수직선", "M4 1v12M1 10l3 -3l3 5l3 -7l3 4"],
  ["추세선", "M1 12l11 -10M1 9l3 -3l3 5l3 -6l3 5"],
  ["모두 지우기", "M1 7l5 -5h5l-4 5zM1 7v4h6v-4M7 11l4 -5v-4M9 9v4M11 8v5M13 9v4"],
  ["차트 이동", "M1.500 5.500h9v7h-9zM4 5v-4h9v7h-2M2 10l3 -2l2 2l3 -2"],
  ["확대경", "M5.500 1a4 4 0 1 0 0.010 0M8.500 8.500l5 5"],
  ["축소", "M2 7h10M2 8h10"],
  ["확대", "M2 7h10M7 2v10M2 8h10M8 2v10"],
  ["자동", "M2 13l4 -11h2l4 11M4 9h6M3 13l4 -10l4 10"],
];

function BottomBar() {
  return (
    <footer className="flex h-[21px] items-start bg-[#f0f0f0] pt-px">
      <button type="button" aria-label="왼쪽" className="flex h-4 w-4 shrink-0 items-center justify-center border border-t-white border-r-[#707070] border-b-[#707070] border-l-white bg-[#ececec]">
        <span className="border-y-4 border-r-4 border-y-transparent border-r-black" />
      </button>
      <div className="flex h-4 min-w-0 flex-1 bg-[#f7f7f7]">
        <div className="ml-auto h-4 w-[44%] max-w-[463px] border border-t-white border-r-[#707070] border-b-[#707070] border-l-[#d0d0d0] bg-[#ececec]" />
      </div>
      <div className="ml-1 flex shrink-0">
        {MEDIA.map(([n, d]) => (
          <button key={n} type="button" aria-label={n} className="flex h-4 w-[17px] items-center justify-center border border-t-white border-r-[#707070] border-b-[#707070] border-l-white bg-[#ececec]">
            <svg width="13" height="13" viewBox="0 0 14 14" fill="#000000"><path d={d} /></svg>
          </button>
        ))}
      </div>
      <div className="relative ml-1 h-4 w-[70px] shrink-0">
        <input type="range" aria-label="속도" defaultValue={33} className="absolute top-0 left-0 h-4 w-full opacity-0" />
        <svg width="70" height="16" viewBox="0 0 70 16" className="pointer-events-none" shapeRendering="crispEdges">
          <path d="M1 4.500h68" stroke="#808080" strokeWidth="2" />
          <path d="M21.500 1h3v8l-1 2l-2 -2z" fill="#f0f0f0" stroke="#808080" />
          <path d="M2.500 13v3M9.500 13v3M15.500 13v3M22.500 13v3M29.500 13v3M35.500 13v3M42.500 13v3M48.500 13v3M55.500 13v3M62.500 13v3M68.500 13v3" stroke="#000000" />
        </svg>
      </div>
      <div className="mr-[3px] ml-1 flex shrink-0">
        {TOOLS.map(([n, d], i) => (
          <button key={n} type="button" aria-label={n} className={`flex h-[17px] w-[17px] items-center justify-center ${i === 3 ? "bg-white" : ""}`}>
            <Icon d={d} c="#606060" />
          </button>
        ))}
      </div>
    </footer>
  );
}

export default function App() {
  return (
    <div className="flex h-screen min-h-[600px] flex-col bg-black pt-px pr-[3px] pb-[3px] pl-[3px] font-['Noto_Sans_CJK_KR',sans-serif] text-[12px] text-black">
      <TitleBar />
      <main className="flex min-h-0 flex-1 flex-col bg-[#d0d0d0] px-[3px]">
        <div className="pt-[5px] pb-[2px]">
          <Toolbar />
          <QuoteBar />
        </div>
        <div className="mt-px min-h-0 flex-1 overflow-hidden">
          <Chart />
        </div>
        <BottomBar />
      </main>
    </div>
  );
}
